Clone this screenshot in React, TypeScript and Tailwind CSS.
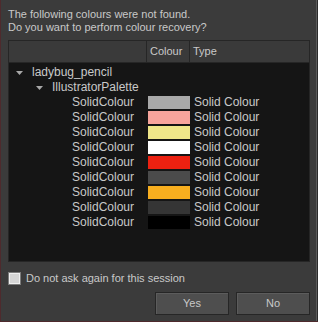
const SWATCHES = [
  "#a9a9a9",
  "#f7a49c",
  "#efe689",
  "#ffffff",
  "#ec2111",
  "#4b4b4b",
  "#f8ae1f",
  "#353535",
  "#000000",
];

const Caret = ({ className }: { className?: string }) => (
  <svg width="7" height="4" viewBox="0 0 7 4" className={className}>
    <polygon points="0,0 7,0 3.5,4" fill="#a8a8a8" />
  </svg>
);

export default function App() {
  return (
    <div
      className="h-[322px] w-[318px] overflow-hidden border-b border-l border-[#4e2a2d] bg-[#2b2b2b] text-[#c9c9c9]"
      style={{ fontFamily: '"Liberation Sans", Arial, sans-serif' }}
    >
      <div className="flex h-full w-[316px] flex-col border-r border-[#5a5a5a] bg-[#3b3b3b] pl-[7px]">
        <div className="pt-[8px] text-[11px] leading-[13px]">
          <p>The following colours were not found.</p>
          <p>Do you want to perform colour recovery?</p>
        </div>

        <div className="mt-[6px] flex h-[222px] w-[302px] flex-col border border-[#262626] bg-[#151515]">
          <div className="flex h-[22px] border-b border-[#262626] bg-[#3a3a3a] text-[11px] leading-[21px]">
            <div className="w-[138px] border-r border-[#262626]" />
            <div className="w-[43px] border-r border-[#262626] pl-[3px]">Colour</div>
            <div className="flex-1 pl-[3px]">Type</div>
          </div>

          <div className="pt-[2px] text-[12px] leading-[15px]">
            <div className="flex h-[15px] items-center">
              <Caret className="ml-[7px]" />
              <span className="ml-[9px]">ladybug_pencil</span>
            </div>
            <div className="flex h-[15px] items-center">
              <Caret className="ml-[27px]" />
              <span className="ml-[9px]">IllustratorPalette</span>
            </div>
            {SWATCHES.map((c, i) => (
              <div key={i} className="flex h-[15px] items-center">
                <span className="ml-[63px] w-[76px]">SolidColour</span>
                <span className="h-[13px] w-[42px]" style={{ backgroundColor: c }} />
                <span className="ml-[4px]">Solid Colour</span>
              </div>
            ))}
          </div>
        </div>

        <label className="mt-[10px] flex h-[12px] items-center text-[11px]">
          <span className="box-border h-[13px] w-[13px] border border-[#7c7c7c] bg-[#d6d6d6] shadow-[inset_0_0_0_1px_#f0f0f0]" />
          <span className="ml-[5px]">Do not ask again for this session</span>
        </label>

        <div className="mt-[8px] flex w-[302px] justify-end gap-[7px] text-[11px]">
          <button className="h-[23px] w-[74px] border border-[#262626] bg-[#4e4e4e] text-[#c9c9c9] shadow-[inset_1px_1px_0_#5c5c5c]">
            Yes
          </button>
          <button className="h-[23px] w-[74px] border border-[#262626] bg-[#4e4e4e] text-[#c9c9c9] shadow-[inset_1px_1px_0_#5c5c5c]">
            No
          </button>
        </div>
      </div>
    </div>
  );
}
